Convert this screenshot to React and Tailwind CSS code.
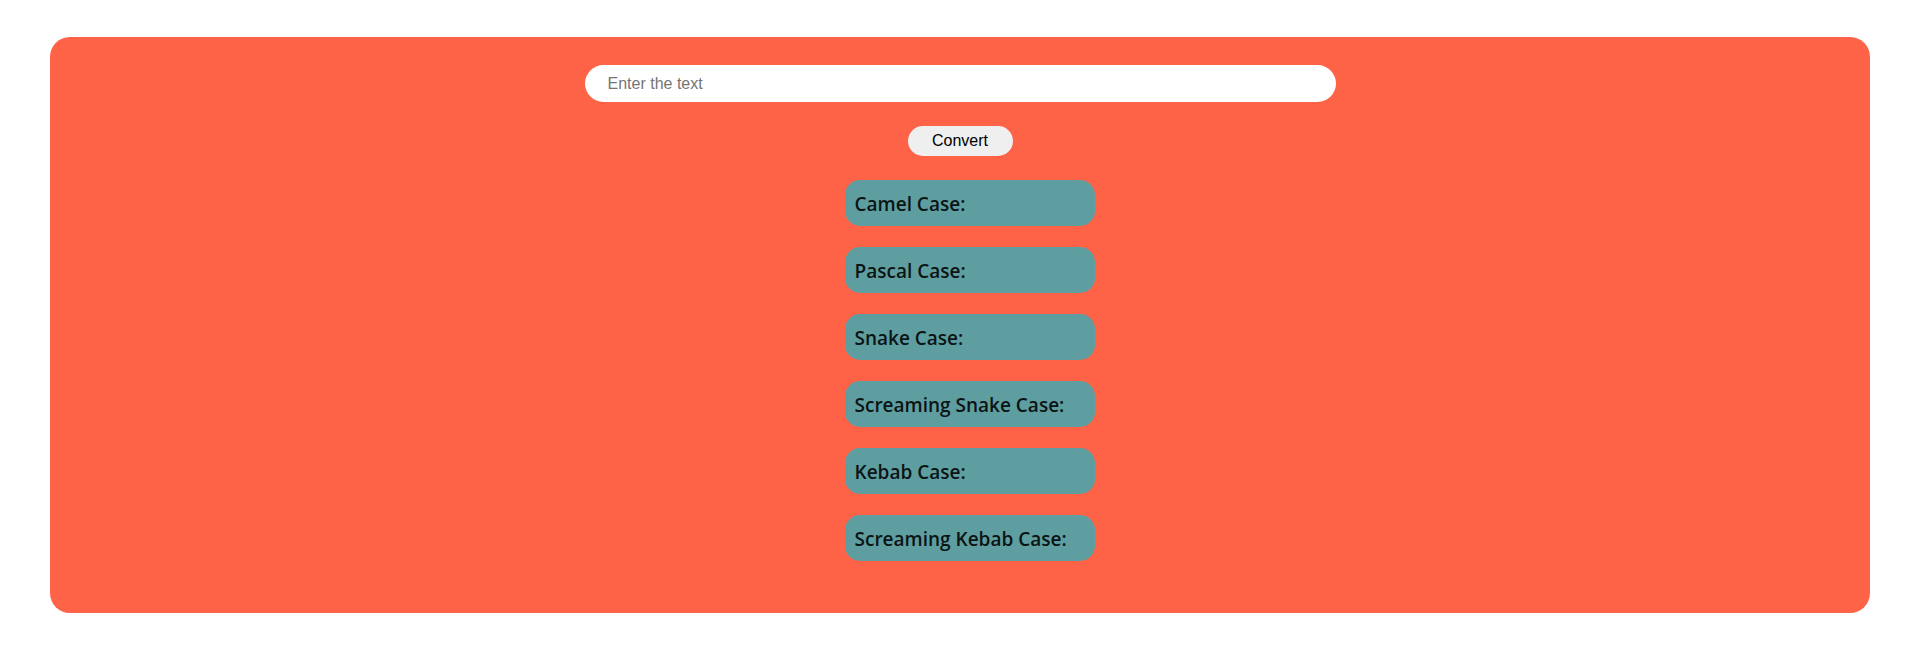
import React, { useState } from "react";

const cases = [
  "Camel Case:",
  "Pascal Case:",
  "Snake Case:",
  "Screaming Snake Case:",
  "Kebab Case:",
  "Screaming Kebab Case:",
];

export default function App() {
  const [text, setText] = useState("");

  return (
    <div className="min-h-screen bg-white pl-[50px] pr-[45px] pt-[37px]">
      <div className="flex flex-col items-center rounded-[20px] bg-[#ff6347] pt-[28px] pb-[52px]">
        <input
          type="text"
          value={text}
          onChange={(e) => setText(e.target.value)}
          placeholder="Enter the text"
          className="h-[37px] w-[751px] rounded-full bg-white pl-[23px] text-[16px] text-black outline-none placeholder:text-[#757575] font-['Liberation_Sans',Arial,sans-serif]"
        />
        <button className="mt-[24px] h-[30px] w-[105px] rounded-full bg-[#efefef] text-[16px] text-black font-['Liberation_Sans',Arial,sans-serif]">
          Convert
        </button>
        <div className="mt-[24px] ml-[19px] flex flex-col gap-[21px]">
          {cases.map((c) => (
            <div
              key={c}
              className="flex h-[46px] w-[250px] items-center rounded-[15px] bg-[#5f9ea0] pl-[10px] pt-[2px]"
            >
              <h3 className="text-[19px] font-semibold text-[#0b1414] font-['Open_Sans','Noto_Sans',sans-serif]">
                {c}
              </h3>
            </div>
          ))}
        </div>
      </div>
    </div>
  );
}
